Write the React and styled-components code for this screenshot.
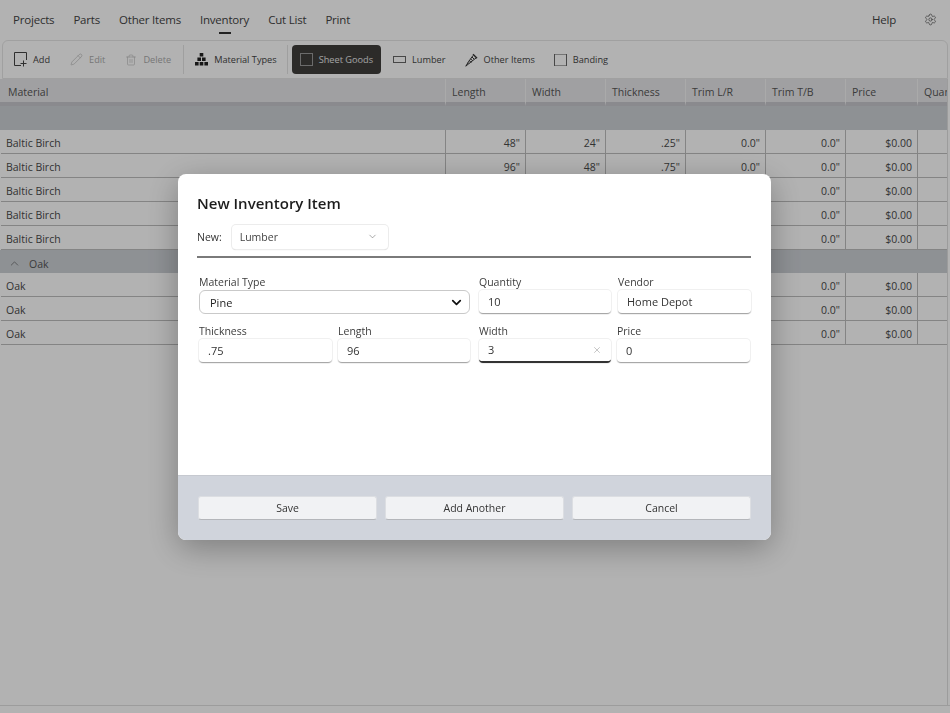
import React from 'react';
import styled, { createGlobalStyle } from 'styled-components';
import { ChevronDown, ChevronUp, Pencil, Settings, Trash2, X } from 'lucide-react';

const Global = createGlobalStyle`
  html, body { margin: 0; padding: 0; height: 100%; overflow: hidden; }
  body { font-family: "Open Sans", "Noto Sans", sans-serif; background: #fff; color: #4a4a4a; }
  * { box-sizing: border-box; }
`;

const Page = styled.div`
  height: 100vh;
  display: flex;
  flex-direction: column;
  overflow: hidden;
`;

const Nav = styled.nav`
  height: 40px;
  flex: none;
  display: flex;
  align-items: center;
  padding: 0 13px 2px;
  gap: 19px;
  font-size: 11.5px;
  letter-spacing: -0.2px;
`;

const NavItem = styled.span`
  position: relative;
  color: #444;
  &::after {
    content: '';
    display: ${p => (p.$active ? 'block' : 'none')};
    position: absolute;
    left: 50%;
    bottom: -7px;
    width: 12px;
    height: 2px;
    margin-left: -6px;
    background: #333;
  }
`;

const NavRight = styled.div`
  margin-left: auto;
  display: flex;
  align-items: center;
  gap: 28px;
  color: #444;
`;

const Toolbar = styled.div`
  height: 39px;
  flex: none;
  margin: 0 2px;
  padding: 0 11px;
  display: flex;
  align-items: center;
  border: 1px solid #e6e6e6;
  border-radius: 6px 6px 0 0;
  font-size: 9.2px;
`;

const Tool = styled.div`
  height: 29px;
  display: flex;
  align-items: center;
  gap: 6px;
  padding: 0 ${p => (p.$active ? '8px' : '0')};
  margin-right: ${p => p.$gap || 0}px;
  border-radius: 4px;
  background: ${p => (p.$active ? '#3f3e3c' : 'transparent')};
  color: ${p => (p.$active ? '#e8e8e8' : p.$disabled ? '#aaa' : '#444')};
  svg { flex: none; }
`;

const ToolDivider = styled.div`
  width: 1px;
  height: 29px;
  background: #e4e4e4;
  margin-right: ${p => p.$gap}px;
`;

const Table = styled.div`
  flex: 1;
  overflow: hidden;
  font-size: 10.5px;
  border-right: 1px solid #e0e0e0;
  margin-right: 2px;
`;

const tail = '80px 80px 80px 80px 80px 72px 80px';

const HeaderRow = styled.div`
  display: grid;
  grid-template-columns: 445px ${tail};
  height: 27px;
  background: #e6e6e9;
  color: #555;
`;

const HeaderCell = styled.div`
  display: flex;
  align-items: center;
  padding: 3px 6px 0 ${p => (p.$first ? '8px' : '6px')};
  white-space: nowrap;
  border-left: ${p => (p.$first ? 'none' : '1px solid #f4f4f4')};
  border-bottom: 4px solid #c6c6cc;
  overflow: hidden;
`;

const GroupRow = styled.div`
  height: ${p => p.$h}px;
  display: flex;
  align-items: center;
  gap: 8px;
  padding: 4px 0 0 8px;
  background: #ccd0d5;
  color: #555;
`;

const Row = styled.div`
  display: grid;
  grid-template-columns: 444px ${tail};
  height: 24px;
  margin-left: 1px;
  background: #fff;
  border-bottom: 1px solid #bdbdbd;
`;

const Cell = styled.div`
  display: flex;
  align-items: center;
  justify-content: ${p => (p.$first ? 'flex-start' : 'flex-end')};
  padding: 2px 5px 0;
  border-left: ${p => (p.$first ? 'none' : '1px solid #bdbdbd')};
  color: #4a4a4a;
  white-space: nowrap;
`;

const BottomBar = styled.div`
  height: 8px;
  flex: none;
  border-top: 1px solid #e0e0e0;
`;

const Overlay = styled.div`
  position: fixed;
  inset: 0;
  padding-right: 1px;
  background: rgba(0, 0, 0, 0.3);
  display: flex;
  align-items: center;
  justify-content: center;
`;

const Dialog = styled.div`
  width: 593px;
  height: 366px;
  display: flex;
  flex-direction: column;
  background: #fff;
  border-radius: 8px;
  overflow: hidden;
  box-shadow: 0 8px 32px rgba(0, 0, 0, 0.3);
`;

const Body = styled.div`
  flex: 1;
  padding: 19px 20px 0 19px;
`;

const Title = styled.h2`
  margin: 0 0 11px;
  font-size: 15px;
  line-height: 21px;
  font-weight: 600;
  color: #1c1c1c;
`;

const NewRow = styled.div`
  display: flex;
  align-items: center;
  gap: 10px;
  height: 24px;
  font-size: 10.5px;
  color: #333;
`;

const TypeSelect = styled.div`
  width: 156px;
  height: 24px;
  padding: 0 10px 0 8px;
  display: flex;
  align-items: center;
  justify-content: space-between;
  border-radius: 4px;
  background: #fff;
  box-shadow: 0 0 0 1px #ececec, 0 1px 1px #ccc;
  color: #444;
  font-size: 10.5px;
`;

const Divider = styled.hr`
  margin: 7px 0 17px;
  border: none;
  height: 2px;
  background: #7a7a7a;
`;

const Fields = styled.div`
  display: flex;
  gap: 9px;
  padding-left: 2px;
`;

const FieldGroup = styled.div`
  display: grid;
  grid-template-columns: ${p => p.$cols};
  column-gap: 6px;
  row-gap: 10px;
`;

const Field = styled.div`
  display: flex;
  flex-direction: column;
  grid-column: ${p => (p.$wide ? 'span 2' : 'auto')};
  margin: 0 ${p => (p.$nudge ? '-1px' : '0')} 0 ${p => (p.$nudge ? '1px' : '0')};
`;

const FieldLabel = styled.label`
  color: #3c3c3c;
  font-size: 10.5px;
  line-height: 15px;
  height: 15px;
`;

const Input = styled.div`
  height: 24px;
  padding: 0 9px;
  display: flex;
  align-items: center;
  justify-content: space-between;
  border-radius: 4px;
  background: #fff;
  color: #333;
  font-size: 11px;
  box-shadow: 0 0 0 1px #f0f0f0;
  border-bottom: ${p => (p.$focus ? '2px solid #333' : '1px solid #a8a8a8')};
`;

const PineSelect = styled(Input)`
  padding: 2px 5px 0 10px;
  border: 1px solid #c9c9c9;
  border-radius: 6px;
  box-shadow: none;
  color: #222;
`;

const Footer = styled.div`
  height: 65px;
  flex: none;
  display: grid;
  grid-template-columns: repeat(3, 1fr);
  gap: 8px;
  padding: 20px;
  background: #d0d4dc;
  border-top: 1px solid #c6c9d0;
`;

const FooterButton = styled.button`
  height: 24px;
  font: inherit;
  font-size: 10.5px;
  color: #333;
  background: #f1f2f4;
  border: 1px solid #dcdee2;
  border-bottom-color: #b4b6ba;
  border-radius: 3px;
  padding: 0;
`;

const AddIcon = () => (
  <svg width="13" height="15" viewBox="0 0 13 15" fill="none" stroke="currentColor" strokeWidth="1">
    <path d="M7 13.5H.5V.5h12V8" />
    <path d="M9.5 8.5v6M6.5 11.5h6" />
  </svg>
);

const StackIcon = () => (
  <svg width="13" height="13" viewBox="0 0 13 13" fill="#222">
    <rect x="4.7" y="0" width="3.6" height="3.5" />
    <rect x="2.4" y="4.5" width="3.6" height="3.5" />
    <rect x="7" y="4.5" width="3.6" height="3.5" />
    <rect x="0" y="9" width="3.6" height="3.5" />
    <rect x="4.7" y="9" width="3.6" height="3.5" />
    <rect x="9.4" y="9" width="3.6" height="3.5" />
  </svg>
);

const SheetIcon = () => (
  <svg width="13" height="13" viewBox="0 0 13 13" fill="none" stroke="#9a9a9a">
    <rect x=".5" y=".5" width="12" height="12" />
  </svg>
);

const LumberIcon = () => (
  <svg width="13" height="7" viewBox="0 0 13 7" fill="none" stroke="#666">
    <rect x=".5" y=".5" width="12" height="6" />
  </svg>
);

const ScrewIcon = () => (
  <svg width="13" height="14" viewBox="0 0 13 14" fill="none" stroke="#333" strokeWidth="1">
    <path d="M8 1.2l4 4" strokeWidth="1.4" />
    <path d="M8 2.5 3 9.5l1 1 7-5.5" />
    <path d="M3 9.5 .8 13.2 4 10.5" />
    <path d="M5.6 5.8l2 2M4.3 7.6l2 2M7 4l2 2" />
  </svg>
);

const BandingIcon = () => (
  <svg width="13" height="12" viewBox="0 0 13 12" fill="none">
    <rect x=".5" y=".5" width="12" height="11" stroke="#a8a8a8" />
    <path d="M.5 0v12M12.5 0v12" stroke="#666" />
  </svg>
);

const tools = [
  { label: 'Add', icon: <AddIcon />, gap: 20 },
  { label: 'Edit', icon: <Pencil size={13} strokeWidth={1} />, disabled: true, gap: 20 },
  { label: 'Delete', icon: <Trash2 size={12} strokeWidth={1} />, disabled: true, gap: 12 },
  { divider: 11 },
  { label: 'Material Types', icon: <StackIcon />, gap: 10 },
  { divider: 4 },
  { label: 'Sheet Goods', icon: <SheetIcon />, active: true, gap: 12 },
  { label: 'Lumber', icon: <LumberIcon />, gap: 19 },
  { label: 'Other Items', icon: <ScrewIcon />, gap: 19 },
  { label: 'Banding', icon: <BandingIcon /> },
];

const headers = ['Material', 'Length', 'Width', 'Thickness', 'Trim L/R', 'Trim T/B', 'Price', 'Quantity'];

const birch = [
  ['48"', '24"', '.25"'],
  ['96"', '48"', '.75"'],
  ['96"', '48"', '.75"'],
  ['96"', '48"', '.75"'],
  ['96"', '48"', '.75"'],
];
const oak = [
  ['96"', '6"', '.75"'],
  ['96"', '4"', '.75"'],
  ['96"', '3"', '.75"'],
];

const ItemRow = ({ name, size }) => (
  <Row>
    <Cell $first>{name}</Cell>
    {size.map((v, i) => <Cell key={i}>{v}</Cell>)}
    <Cell>0.0"</Cell>
    <Cell>0.0"</Cell>
    <Cell>$0.00</Cell>
    <Cell />
  </Row>
);

export default function App() {
  return (
    <Page>
      <Global />
      <Nav>
        <NavItem>Projects</NavItem>
        <NavItem>Parts</NavItem>
        <NavItem>Other Items</NavItem>
        <NavItem $active>Inventory</NavItem>
        <NavItem>Cut List</NavItem>
        <NavItem>Print</NavItem>
        <NavRight>
          <span>Help</span>
          <Settings size={13} strokeWidth={1.2} />
        </NavRight>
      </Nav>
      <Toolbar>
        {tools.map((t, i) =>
          t.divider ? (
            <ToolDivider key={i} $gap={t.divider} />
          ) : (
            <Tool key={i} $active={t.active} $disabled={t.disabled} $gap={t.gap}>
              {t.icon}
              {t.label}
            </Tool>
          )
        )}
      </Toolbar>
      <Table>
        <HeaderRow>
          {headers.map((h, i) => <HeaderCell key={h} $first={i === 0}>{h}</HeaderCell>)}
        </HeaderRow>
        <GroupRow $h={24} />
        {birch.map((s, i) => <ItemRow key={i} name="Baltic Birch" size={s} />)}
        <GroupRow $h={23}>
          <ChevronUp size={13} strokeWidth={1.2} />
          Oak
        </GroupRow>
        {oak.map((s, i) => <ItemRow key={i} name="Oak" size={s} />)}
      </Table>
      <BottomBar />
      <Overlay>
        <Dialog>
          <Body>
            <Title>New Inventory Item</Title>
            <NewRow>
              New:
              <TypeSelect>
                Lumber
                <ChevronDown size={11} strokeWidth={1} />
              </TypeSelect>
            </NewRow>
            <Divider />
            <Fields>
              <FieldGroup $cols="133px 132px">
                <Field $wide>
                  <FieldLabel>Material Type</FieldLabel>
                  <PineSelect>
                    Pine
                    <ChevronDown size={15} strokeWidth={2.8} color="#111" />
                  </PineSelect>
                </Field>
                <Field><FieldLabel>Thickness</FieldLabel><Input>.75</Input></Field>
                <Field><FieldLabel>Length</FieldLabel><Input>96</Input></Field>
              </FieldGroup>
              <FieldGroup $cols="132px 133px">
                <Field><FieldLabel>Quantity</FieldLabel><Input>10</Input></Field>
                <Field $nudge><FieldLabel>Vendor</FieldLabel><Input>Home Depot</Input></Field>
                <Field>
                  <FieldLabel>Width</FieldLabel>
                  <Input $focus>
                    3
                    <X size={10} strokeWidth={1} color="#777" />
                  </Input>
                </Field>
                <Field><FieldLabel>Price</FieldLabel><Input>0</Input></Field>
              </FieldGroup>
            </Fields>
          </Body>
          <Footer>
            <FooterButton>Save</FooterButton>
            <FooterButton>Add Another</FooterButton>
            <FooterButton>Cancel</FooterButton>
          </Footer>
        </Dialog>
      </Overlay>
    </Page>
  );
}
